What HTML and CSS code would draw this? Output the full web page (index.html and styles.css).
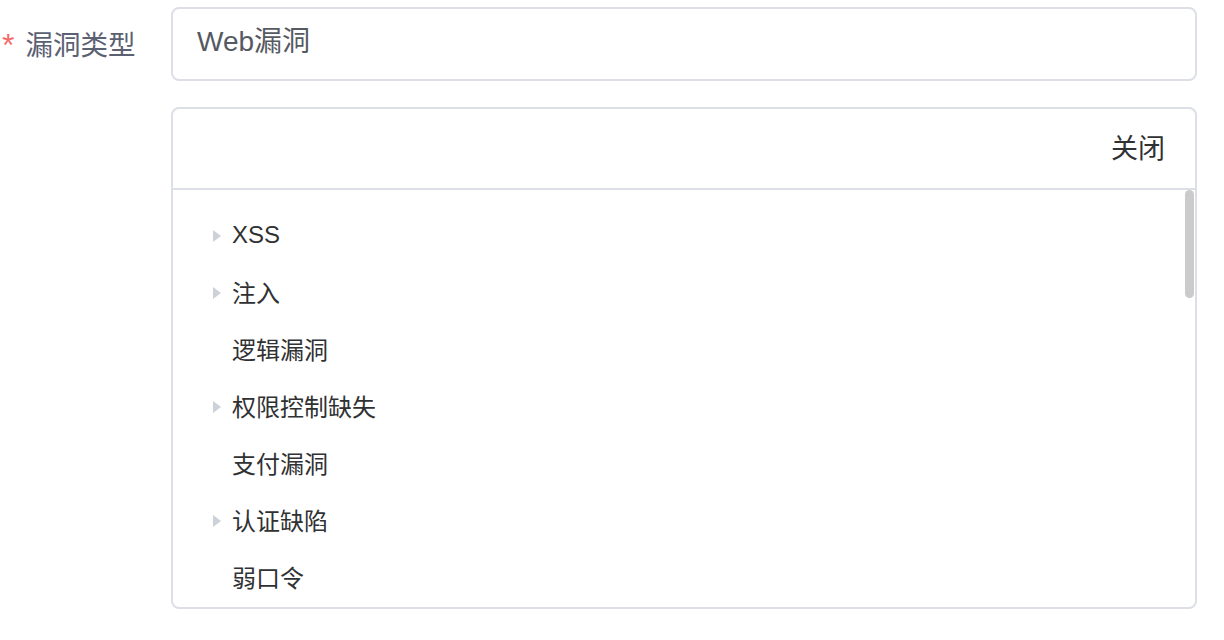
FILE: index.html
```html
<!DOCTYPE html>
<html lang="zh-CN">
<head>
<meta charset="utf-8">
<title>漏洞类型</title>
<link rel="stylesheet" href="styles.css">
</head>
<body>
<div class="form-item">
  <label class="label"><span class="star">*</span>漏洞类型</label>
  <div class="content">
    <div class="input">Web漏洞</div>
    <div class="panel">
      <div class="panel-head"><span class="close">关闭</span></div>
      <div class="panel-body">
        <ul class="tree">
          <li class="node"><span class="caret"></span><span class="text">XSS</span></li>
          <li class="node"><span class="caret"></span><span class="text">注入</span></li>
          <li class="node"><span class="caret leaf"></span><span class="text">逻辑漏洞</span></li>
          <li class="node"><span class="caret"></span><span class="text">权限控制缺失</span></li>
          <li class="node"><span class="caret leaf"></span><span class="text">支付漏洞</span></li>
          <li class="node"><span class="caret"></span><span class="text">认证缺陷</span></li>
          <li class="node"><span class="caret leaf"></span><span class="text">弱口令</span></li>
        </ul>
        <div class="thumb"></div>
      </div>
    </div>
  </div>
</div>
</body>
</html>
```
FILE: styles.css
```css
html, body {
  margin: 0;
  padding: 0;
  background: #ffffff;
}
body {
  font-family: "Liberation Sans", "Noto Sans CJK SC", sans-serif;
  width: 1224px;
  height: 640px;
  overflow: hidden;
}
.form-item {
  display: flex;
  align-items: flex-start;
  padding-top: 7px;
}
.label {
  width: 171px;
  box-sizing: border-box;
  padding-left: 2px;
  padding-bottom: 2px;
  height: 74px;
  display: flex;
  align-items: center;
  font-size: 27.5px;
  color: #5b6072;
}
.star {
  color: #f56c6c;
  margin-right: 11px;
  font-size: 32px;
  position: relative;
  top: 2px;
}
.content {
  width: 1026px;
}
.input {
  height: 74px;
  box-sizing: border-box;
  border: 2px solid #dcdfe6;
  border-radius: 8px;
  padding: 0 24px 10px 24px;
  display: flex;
  align-items: center;
  font-size: 28px;
  color: #555a62;
}
.panel {
  margin-top: 26px;
  height: 502px;
  box-sizing: border-box;
  border: 2px solid #dcdfe6;
  border-radius: 8px;
  display: flex;
  flex-direction: column;
  overflow: hidden;
}
.panel-head {
  height: 81px;
  flex: none;
  box-sizing: border-box;
  border-bottom: 2px solid #dcdfe6;
  display: flex;
  align-items: center;
  justify-content: flex-end;
  padding: 0 30px 4px 0;
}
.close {
  font-size: 27px;
  color: #303133;
}
.panel-body {
  flex: 1;
  position: relative;
  overflow: hidden;
}
.tree {
  list-style: none;
  margin: 0;
  padding: 16px 0 0 0;
}
.node {
  height: 57px;
  display: flex;
  align-items: center;
  padding-left: 40px;
  font-size: 24px;
  color: #303133;
}
.caret {
  width: 0;
  height: 0;
  border-left: 8px solid #cdd1d8;
  border-top: 6px solid transparent;
  border-bottom: 6px solid transparent;
  margin-right: 11px;
  position: relative;
  top: 1px;
}
.caret.leaf {
  border-left-color: transparent;
}
.thumb {
  position: absolute;
  right: 1px;
  top: 0;
  width: 9px;
  height: 108px;
  border-radius: 5px;
  background: #cbcbcb;
}
```
